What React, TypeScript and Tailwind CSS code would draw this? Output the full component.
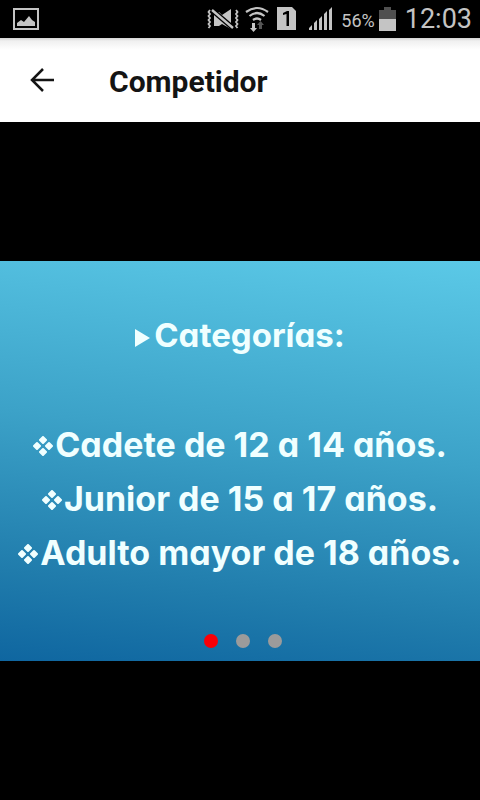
import { useState } from "react";

const lines = [
  "Cadete de 12 a 14 años.",
  "Junior de 15 a 17 años.",
  "Adulto mayor de 18 años.",
];

function StatusBar() {
  return (
    <div className="flex h-[38px] shrink-0 items-center bg-black pl-3 pr-2 text-[#c4c4c4]">
      <svg width="28" height="24" viewBox="0 0 28 24" aria-hidden="true">
        <rect x="2" y="2" width="24" height="20" fill="none" stroke="currentColor" strokeWidth="2" />
        <path d="M5 19v-3l4-3 3 2 5-6 3 4 3 2v4z" fill="currentColor" />
      </svg>
      <div className="ml-auto flex items-center">
        <svg width="32" height="26" viewBox="0 0 32 26" aria-hidden="true">
          <g fill="none" stroke="currentColor" strokeWidth="1.8">
            <path d="M3 4l-1.500 2 1.500 2-1.500 2 1.500 2-1.500 2 1.500 2-1.500 2 1.500 2-1.500 2M29 4l1.500 2-1.500 2 1.500 2-1.500 2 1.500 2-1.500 2 1.500 2-1.500 2 1.500 2" />
          </g>
          <path d="M7 6h5l3 3 9-6v20l-9-5-3 2H7z" fill="currentColor" />
          <path d="M5 4l21 18" stroke="#000" strokeWidth="5" />
          <path d="M5 4l21 18" stroke="currentColor" strokeWidth="2.4" />
        </svg>
        <svg className="ml-1.5" width="24" height="26" viewBox="0 0 24 26" aria-hidden="true">
          <g fill="none" stroke="currentColor" strokeWidth="2.2">
            <path d="M1 6q11-8 22 0M4.500 10q7.500-6 15 0M8 14q4-3 8 0" />
          </g>
          <path d="M7 17h3v5h2l-3.500 4-3.500-4h2z" fill="currentColor" />
          <path d="M14 23v-4h-2l3.500-4 3.500 4h-2v4z" fill="#555" />
        </svg>
        <svg className="ml-2" width="20" height="24" viewBox="0 0 20 24" aria-hidden="true">
          <path d="M0 0h15l4 4v19H0z" fill="currentColor" />
          <path d="M6 6l4-2h2v15H9.500V7L6 8z" fill="#000" />
        </svg>
        <svg className="ml-3" width="24" height="24" viewBox="0 0 24 24" fill="currentColor" aria-hidden="true">
          <path d="M0 23v-2l3-3v5zM5 23v-7l3-3v10zM10 23V12l3-3v14zM15 23V7l3-3v19zM20 23V3l3-3v23z" />
        </svg>
        <span className="ml-2 mt-1 font-[Roboto,sans-serif] text-lg leading-6">56%</span>
        <svg className="ml-1" width="18" height="24" viewBox="0 0 18 24" aria-hidden="true">
          <path d="M0 12V3h5V0h7v3h5v9z" fill="#505050" />
          <path d="M0 12h17v12H0z" fill="currentColor" />
        </svg>
        <span className="ml-2 font-[Roboto,sans-serif] text-[27px] leading-8">12:03</span>
      </div>
    </div>
  );
}

function Diamonds() {
  return (
    <svg className="mt-1" width="20" height="20" viewBox="0 0 20 20" fill="currentColor" stroke="currentColor" strokeWidth="2" strokeLinejoin="round" aria-hidden="true">
      <path d="M10 1l3 3-3 3-3-3zM4 7l3 3-3 3-3-3zM16 7l3 3-3 3-3-3zM10 13l3 3-3 3-3-3z" />
    </svg>
  );
}

export default function App() {
  const [active, setActive] = useState(0);
  return (
    <div className="flex min-h-screen flex-col bg-black">
      <StatusBar />
      <header className="flex h-[84px] shrink-0 items-center bg-white bg-[linear-gradient(#d4d4d4,#f0f0f0_3px,#ffffff_12px)] pl-7 text-[#141414]">
        <button type="button" aria-label="Atrás" className="flex h-10 w-7 items-center justify-center">
          <svg width="26" height="24" viewBox="0 0 26 24" fill="none" stroke="currentColor" strokeWidth="2.5" aria-hidden="true">
            <path d="M14 1L3 12l11 11M3 12h22" />
          </svg>
        </button>
        <h1 className="ml-[53px] mt-1 font-[Roboto,sans-serif] text-[30px] font-bold leading-9">Competidor</h1>
      </header>
      <main className="flex flex-1 flex-col justify-center">
        <section className="flex h-[400px] flex-col bg-[linear-gradient(187deg,#5bc9e7,#3ca2c8_45%,#207cac_80%,#0f66a0)] pt-12 text-center font-[Inter,sans-serif] text-[34px] font-bold text-[#f0ffff] [font-feature-settings:'cv11']">
          <h2 className="mb-[54px] flex h-[54px] items-center justify-center gap-1 text-[33px]">
            <svg className="mt-1" width="15" height="18" viewBox="0 0 15 18" fill="currentColor" aria-hidden="true">
              <path d="M0 0l15 9-15 9z" />
            </svg>
            Categorías:
          </h2>
          <ul>
            {lines.map((line) => (
              <li key={line} className="flex h-[54px] items-center justify-center gap-0.5 whitespace-nowrap">
                <Diamonds />
                {line}
              </li>
            ))}
          </ul>
          <div className="mb-[13px] ml-1.5 mt-auto flex justify-center gap-[18px]">
            {[0, 1, 2].map((i) => (
              <button
                key={i}
                type="button"
                aria-label={`Diapositiva ${i + 1}`}
                onClick={() => setActive(i)}
                className={active === i ? "size-3.5 rounded-full bg-[#fb0007]" : "size-3.5 rounded-full bg-[#9b9b9b]"}
              />
            ))}
          </div>
        </section>
      </main>
    </div>
  );
}
